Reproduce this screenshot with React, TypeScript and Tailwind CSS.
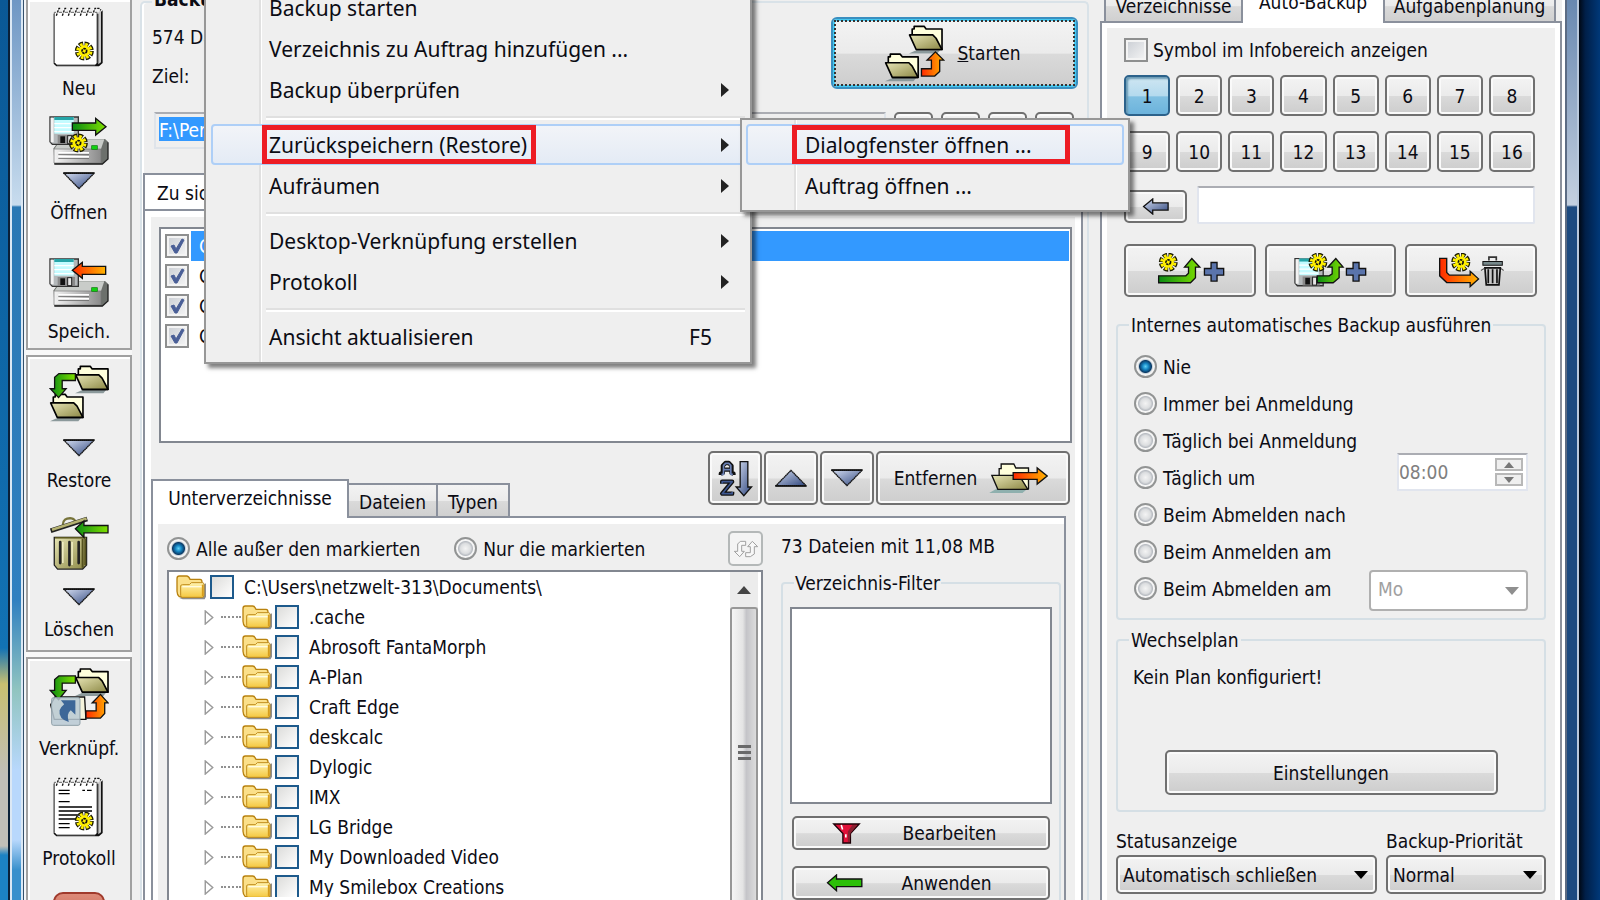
import React, { useId } from "react";

const BTN =
  "rounded-[5px] border-2 border-[#707070] bg-[linear-gradient(#f3f3f3,#ebebeb_50%,#dadada_52%,#cdcdcd)] shadow-[inset_0_0_0_2px_#fafafa] flex items-center justify-center";

function Defs({ id }: { id: string }) {
  return (
    <defs>
      <linearGradient id={id + "o"} x1="0" y1="0" x2="1" y2="1">
        <stop offset="0" stopColor="#e6e4b4" />
        <stop offset="1" stopColor="#8c8845" />
      </linearGradient>
      <linearGradient id={id + "g"} x1="0" y1="0" x2="1" y2="0">
        <stop offset="0" stopColor="#0a8a14" />
        <stop offset="1" stopColor="#7fe000" />
      </linearGradient>
      <linearGradient id={id + "r"} x1="0" y1="0" x2="1" y2="0">
        <stop offset="0" stopColor="#ff2a00" />
        <stop offset="1" stopColor="#ffb400" />
      </linearGradient>
      <linearGradient id={id + "b"} x1="0" y1="0" x2="1" y2="1">
        <stop offset="0" stopColor="#d3dcf0" />
        <stop offset="1" stopColor="#31487f" />
      </linearGradient>
      <linearGradient id={id + "s"} x1="0" y1="0" x2="1" y2="0">
        <stop offset="0" stopColor="#f4f4f4" />
        <stop offset="1" stopColor="#8a8a8a" />
      </linearGradient>
    </defs>
  );
}

function Folder({ x, y, id }: { x: number; y: number; id: string }) {
  return (
    <g transform={`translate(${x} ${y})`} strokeLinejoin="round">
      <path d="M-2 84L20 74H92L84 84Z" fill="#8b999b" />
      <path d="M8 30V10H14V2H44L50 10H98V72H22Z" fill="#ffffdc" stroke="#000" strokeWidth="5" />
      <path d="M0 28H70L80 38L98 72H20Z" fill={`url(#${id}o)`} stroke="#000" strokeWidth="5" />
    </g>
  );
}

function Gear({ x, y }: { x: number; y: number }) {
  return (
    <g transform={`translate(${x} ${y})`}>
      <circle r="20" fill="none" stroke="#1a1a00" strokeWidth="17" strokeDasharray="12 3.7" />
      <circle r="20" fill="none" stroke="#fff000" strokeWidth="9" strokeDasharray="8 7.7" strokeDashoffset="-2" />
      <circle r="17" fill="#fff000" />
      <circle r="7" fill="none" stroke="#111" strokeWidth="5" strokeDasharray="7 2" />
    </g>
  );
}

function Notepad({ lines }: { lines?: boolean }) {
  return (
    <svg viewBox="150 20 180 180" className="size-[60px]" aria-hidden="true">
      <path d="M175 40H300L311 30V188L300 198H172L164 190V40Z" fill="#111" />
      <path d="M298 36L306 30V186L298 192Z" fill="#c8c8c8" />
      <path d="M166 36H294V188L288 194H174L166 186Z" fill="#fff" stroke="#666" strokeWidth="3" />
      <path d="M172 46L180 24M190 46L198 24M208 46L216 24M226 46L234 24M244 46L252 24M262 46L270 24M280 46L288 24" stroke="#fff" strokeWidth="8" />
      <path d="M172 46L180 24H186M190 46L198 24H204M208 46L216 24H222M226 46L234 24H240M244 46L252 24H258M262 46L270 24H276M280 46L288 24H300L306 30" fill="none" stroke="#111" strokeWidth="4" strokeDasharray="7 3" />
      {lines && (
        <path d="M179 60H212M179 70H212M250 60H258M264 60H278M179 94H212M179 110H279M179 122H279M179 134H240M179 146H232M179 160H212M179 172H212" stroke="#000" strokeWidth="4" />
      )}
      <Gear x={256} y={152} />
    </svg>
  );
}

function Floppy() {
  return (
    <g>
      <path d="M153 348H238V430H160L153 422Z" fill="#b4b8ba" stroke="#333" strokeWidth="4" />
      <path d="M155 350H164V424H155Z" fill="#f2f2f2" />
      <rect x="166" y="348" width="58" height="50" fill="#c4fbff" />
      <rect x="166" y="348" width="58" height="9" fill="#25a5a8" />
      <path d="M166 368H224M166 380H224M166 392H224" stroke="#fff" strokeWidth="4" />
      <rect x="176" y="402" width="52" height="27" fill="#8a8a8a" />
      <rect x="184" y="406" width="14" height="20" fill="#111" />
      <rect x="206" y="404" width="12" height="24" fill="#e6e6e6" stroke="#222" strokeWidth="3" />
    </g>
  );
}

function Drive({ save }: { save?: boolean }) {
  const id = useId();
  return (
    <svg viewBox="150 345 180 147" className="h-[49px] w-[60px]" aria-hidden="true">
      <Defs id={id} />
      <path d="M164 442L184 414H318L327 422V474L310 490H166Z" fill="#6c706c" />
      <path d="M166 444L186 415H316L306 444Z" fill="#c9ccc9" />
      <path d="M165 444H306V486H165Z" fill={`url(#${id}s)`} stroke="#777" strokeWidth="2" />
      <path d="M178 456H270M178 468H270" stroke="#fff" strokeWidth="6" />
      <path d="M178 460H270M178 472H270" stroke="#6e6e6e" strokeWidth="3" />
      <path d="M166 489H310L327 474V424" fill="none" stroke="#222" strokeWidth="4" />
      <rect x="278" y="434" width="17" height="11" fill="#10d010" stroke="#087808" strokeWidth="2" />
      <Floppy />
      {save ? (
        <path d="M320 370H250V358L220 382L250 406V394H320Z" fill={`url(#${id}r)`} stroke="#111" strokeWidth="4" />
      ) : (
        <>
          <path d="M220 366H290V352L321 377L290 402V388H220Z" fill={`url(#${id}g)`} stroke="#111" strokeWidth="4" />
          <Gear x={238} y={426} />
        </>
      )}
    </svg>
  );
}

function Tri({ up }: { up?: boolean }) {
  const id = useId();
  return (
    <svg viewBox="0 0 96 54" className="h-[18px] w-[32px]" aria-hidden="true">
      <Defs id={id} />
      <path
        d={up ? "M3 50H93L48 4Z" : "M3 4H93L48 50Z"}
        fill={`url(#${id}b)`}
        stroke="#111"
        strokeWidth="4"
        strokeDasharray="5 1"
      />
      <path d={up ? "M1 51H95" : "M1 3H95"} stroke="#111" strokeWidth="5" />
    </svg>
  );
}

function RestoreIcon() {
  const id = useId();
  return (
    <svg viewBox="148 56 182 177" className="h-[59px] w-[60px]" aria-hidden="true">
      <Defs id={id} />
      <Folder x={229} y={60} id={id} />
      <Folder x={153} y={145} id={id} />
      <path d="M228 84H178L165 95V130H152L177 157L200 130H188V105H228Z" fill={`url(#${id}g)`} stroke="#111" strokeWidth="4" />
    </svg>
  );
}

function TrashIcon() {
  const id = useId();
  return (
    <svg viewBox="148 508 182 165" className="h-[55px] w-[60px]" aria-hidden="true">
      <Defs id={id} />
      <path d="M164 572H262V656L250 668H174L164 656Z" fill={`url(#${id}o)`} stroke="#222" strokeWidth="4" />
      <path d="M250 576V664M258 576V656" stroke="#55521f" strokeWidth="6" />
      <path d="M182 586V650M210 586V656M238 586V650" stroke="#222" strokeWidth="8" strokeLinecap="round" />
      <path d="M190 586V650M218 586V656" stroke="#f8f6d0" strokeWidth="4" />
      <path d="M166 573H260" stroke="#5a5720" strokeWidth="5" />
      <path d="M190 534Q190 512 216 514Q226 516 228 524" fill="none" stroke="#77743a" strokeWidth="7" />
      <path d="M153 552L264 516" stroke="#222" strokeWidth="14" />
      <path d="M157 549L262 515" stroke="#b5b272" strokeWidth="8" />
      <path d="M327 536H254V522L228 546L254 572V558H327Z" fill={`url(#${id}g)`} stroke="#111" strokeWidth="4" />
    </svg>
  );
}

function LinkIcon() {
  const id = useId();
  return (
    <svg viewBox="148 82 182 180" className="size-[60px]" aria-hidden="true">
      <Defs id={id} />
      <path d="M153 196L166 172H256L260 240H164Z" fill="#f6f4dc" stroke="#111" strokeWidth="4" />
      <Folder x={229} y={85} id={id} />
      <path d="M228 108H178L165 119V152H152L177 180L200 152H188V130H228Z" fill={`url(#${id}g)`} stroke="#111" strokeWidth="4" />
      <path d="M260 214H291V190H279L304 164L327 190H317V222L304 236H260Z" fill={`url(#${id}r)`} stroke="#111" strokeWidth="4" />
      <rect x="156" y="174" width="86" height="84" rx="6" fill="#b9c9d3" fillOpacity=".85" stroke="#8fa0a8" strokeWidth="3" />
      <path d="M184 182H228V226L214 212Q200 222 208 248Q176 238 180 212Q182 204 194 194Z" fill="#3d6798" />
    </svg>
  );
}

function StartIcon() {
  const id = useId();
  return (
    <svg viewBox="552 70 184 176" className="h-[59px] w-[61px]" aria-hidden="true">
      <Defs id={id} />
      <Folder x={629} y={74} id={id} />
      <Folder x={557} y={158} id={id} />
      <path d="M665 204H695V178H682L707 153L732 178H720V212L705 226H665Z" fill={`url(#${id}r)`} stroke="#111" strokeWidth="4" />
    </svg>
  );
}

function SmallFolder() {
  const id = useId();
  return (
    <svg viewBox="0 0 90 74" className="h-[26px] w-[30px] shrink-0" aria-hidden="true">
      <defs>
        <linearGradient id={id} x1="0" y1="0" x2="0" y2="1">
          <stop offset="0" stopColor="#fff3b0" />
          <stop offset="1" stopColor="#f5c840" />
        </linearGradient>
      </defs>
      <path d="M10 70L20 74H86L90 66V26Z" fill="#8d8d8d" />
      <path d="M3 12Q3 4 10 4H32Q38 4 42 14H72Q78 14 78 22V66H10Q3 60 3 50Z" fill="#fbe08a" stroke="#b9820f" strokeWidth="4" />
      <path d="M14 34Q14 30 20 30H40L46 24H80Q84 24 84 30V62Q84 68 78 68H18Q14 68 14 62Z" fill={`url(#${id})`} stroke="#c08c1c" strokeWidth="3" />
      <path d="M19 36H79" stroke="#fffbe0" strokeWidth="4" />
      <path d="M80 30V64" stroke="#d79d1c" strokeWidth="5" />
    </svg>
  );
}

function SideButton({
  icon,
  drop,
  label,
  gap = "",
  labelGap = "mt-[9px]",
}: {
  icon: React.ReactNode;
  drop?: string;
  label: string;
  gap?: string;
  labelGap?: string;
}) {
  return (
    <button className={"flex w-full flex-col items-center " + gap}>
      {icon}
      {drop && (
        <span className={drop}>
          <Tri />
        </span>
      )}
      <span className={labelGap}>{label}</span>
    </button>
  );
}

function Radio({ name, label, checked }: { name: string; label: string; checked?: boolean }) {
  return (
    <label className="flex h-[37px] items-center gap-[6px] whitespace-nowrap">
      <input
        type="radio"
        name={name}
        defaultChecked={checked}
        className="size-[23px] shrink-0 appearance-none rounded-full border-2 border-[#929494] bg-[radial-gradient(circle,#f4f4f4_0,#dcdee0_5px,#b8bcc2_7px,#f6f6f6_8px)] checked:bg-[radial-gradient(circle_at_50%_50%,#5fd0f5_0,#1687c4_3px,#0b3a66_6px,#c9d3da_7px,#f4f4f4_8px)]"
      />
      {label}
    </label>
  );
}

function Check({ label, checked }: { label: string; checked?: boolean }) {
  return (
    <span className="grid size-[24px] shrink-0">
      <input
        type="checkbox"
        aria-label={label}
        defaultChecked={checked}
        className="[grid-area:1/1] size-[24px] appearance-none border-2 border-[#8e8f8f] bg-[linear-gradient(135deg,#c9cdd3,#f6f6f6)] shadow-[inset_0_0_0_2px_#f4f4f4]"
      />
      {checked && (
        <svg viewBox="0 0 24 24" className="pointer-events-none [grid-area:1/1]" aria-hidden="true">
          <path d="M6 12L9 11L11 15L17 5L19 6L12 19H10Z" fill="#4a5f97" stroke="#4a5f97" />
        </svg>
      )}
    </span>
  );
}

function Combo({ id, label, value, disabled, box }: { id?: string; label?: string; value: string; disabled?: boolean; box: string }) {
  return (
    <span className={"grid " + box}>
      <select
        id={id}
        aria-label={label}
        disabled={disabled}
        className={
          disabled
            ? "[grid-area:1/1] appearance-none rounded-[4px] border-2 border-[#b0b0b0] bg-white pb-[4px] pl-[7px] text-[#a0a0a0] opacity-100"
            : "[grid-area:1/1] appearance-none rounded-[5px] border-2 border-[#707070] bg-[linear-gradient(#f3f3f3,#ebebeb_50%,#dadada_52%,#cdcdcd)] pl-[5px] shadow-[inset_0_0_0_2px_#fafafa]"
        }
      >
        <option>{value}</option>
      </select>
      <svg viewBox="0 0 14 8" className="pointer-events-none mr-[9px] h-[8px] w-[14px] self-center justify-self-end [grid-area:1/1]" aria-hidden="true">
        <path d="M0 0H14L7 8Z" fill={disabled ? "#8f8f8f" : "#000"} />
      </svg>
    </span>
  );
}

const folders = [
  ".cache",
  "Abrosoft FantaMorph",
  "A-Plan",
  "Craft Edge",
  "deskcalc",
  "Dylogic",
  "IMX",
  "LG Bridge",
  "My Downloaded Video",
  "My Smilebox Creations",
];

const GROUP = "border-2 border-[#a0a0a0] shadow-[inset_1px_1px_0_1px_#fff]";

function Sidebar() {
  return (
    <nav aria-label="Werkzeuge" className="flex w-[106px] shrink-0 flex-col gap-[5px] bg-[#f8f8f8]">
      <div className={"h-[350px] shrink-0 border-t-0 bg-[#efefef] pt-[7px] " + GROUP}>
        <SideButton icon={<Notepad />} label="Neu" />
        <SideButton icon={<Drive />} drop="mt-[7px]" label="Öffnen" gap="mt-4" labelGap="mt-[10px]" />
        <SideButton icon={<Drive save />} label="Speich." gap="mt-[34px]" labelGap="mt-3" />
      </div>
      <div className={"h-[297px] shrink-0 bg-[#efefef] pt-[7px] " + GROUP}>
        <SideButton icon={<RestoreIcon />} drop="mt-4" label="Restore" labelGap="mt-[11px]" />
        <SideButton icon={<TrashIcon />} drop="mt-[17px]" label="Löschen" gap="mt-6" labelGap="mt-[11px]" />
      </div>
      <div className={"flex-1 border-b-0 bg-[#efefef] pt-[8px] " + GROUP}>
        <SideButton icon={<LinkIcon />} label="Verknüpf." />
        <SideButton icon={<Notepad lines />} label="Protokoll" gap="mt-[17px]" />
        <div className="mx-auto mt-[22px] h-[60px] w-[52px] rounded-t-[10px] border-2 border-[#a03a2c] bg-[linear-gradient(#dd8a78,#b84a38)]" />
      </div>
    </nav>
  );
}

function SortIcon() {
  const id = useId();
  return (
    <svg viewBox="86 88 104 114" className="h-[38px] w-[35px]" aria-hidden="true">
      <Defs id={id} />
      <g fill="none" strokeLinejoin="round">
        <path d="M94 136V132L100 130V108L108 100H118L126 108V130L132 132V136M104 120H122" stroke="#111" strokeWidth="13" />
        <path d="M96 134H102V108L108 101H118L124 108V134H130M104 120H122" stroke="#6a80b4" strokeWidth="5" />
        <path d="M98 162V156H128L98 192H128V186" stroke="#111" strokeWidth="13" />
        <path d="M98 162V156H128L98 192H128V186" stroke="#3d568f" strokeWidth="5" />
      </g>
      <path d="M152 96H175V172H186L163 198L140 172H152Z" fill={`url(#${id}b)`} stroke="#111" strokeWidth="4" />
    </svg>
  );
}

function RemoveIcon() {
  const id = useId();
  return (
    <svg viewBox="900 100 176 96" className="h-[32px] w-[59px]" aria-hidden="true">
      <Defs id={id} />
      <path d="M900 193L930 176H1020L1000 193Z" fill="#8fb0ae" />
      <path d="M930 140V120H936V106H974L980 118H1018V180H940Z" fill="#ffffdc" stroke="#111" strokeWidth="4" />
      <path d="M908 140H990L1016 182H926Z" fill={`url(#${id}o)`} stroke="#111" strokeWidth="4" />
      <path d="M972 132H1044V118L1074 142L1044 166V152H972Z" fill={`url(#${id}r)`} stroke="#111" strokeWidth="4" />
    </svg>
  );
}

function Main() {
  return (
    <main className="mt-px ml-[8px] flex min-w-0 flex-1 flex-col rounded-t-[5px] border-2 border-b-0 border-[#d9e2e8] shadow-[inset_2px_0_0_#fff]">
      <div className="flex h-[111px] items-start justify-between pr-[9px] pl-[10px]">
        <div>
          <h2 className="-mt-[16px] bg-[#efefef] pl-[2px] font-bold">Backup-Auftrag</h2>
          <p className="mt-[14px]">574 Dateien</p>
          <p className="mt-[15px]">Ziel:</p>
        </div>
        <button className="mt-[14px] h-[72px] w-[247px] rounded-[6px] border-2 border-[#3a8fc0] bg-[linear-gradient(#f3f3f3,#ebebeb_50%,#dadada_52%,#cdcdcd)] p-[1px] shadow-[inset_0_0_0_2px_#45c8f0]">
          <span className="flex size-full items-center justify-center gap-[12px] border-2 border-dotted border-[#333] pr-1">
            <StartIcon />
            <span>
              <u>S</u>tarten
            </span>
          </span>
        </button>
      </div>
      <div className="flex gap-2 pr-[13px] pl-3">
        <input
          aria-label="Ziel"
          defaultValue="F:\Persönlich"
          className="h-[37px] min-w-0 flex-1 border-2 border-[#dfe4ea] border-t-[#abadb3] bg-[linear-gradient(#3399ff,#3399ff)] bg-[length:240px_24px] bg-[position:3px_3px] bg-no-repeat pl-[3px] text-white"
        />
        {["Öffnen", "Suchen", "Verlauf", "Optionen"].map((n) => (
          <button key={n} aria-label={n} className={"h-[37px] w-[39px] " + BTN} />
        ))}
      </div>
      <div className="mt-6 ml-[1px] h-[39px] w-[300px] border-2 border-b-0 border-[#8a909c] bg-white pt-[6px] pl-[12px]">Zu sichernde Verzeichnisse</div>
      <div className="-mt-[2px] mr-[4px] ml-[1px] flex flex-1 flex-col border-2 border-b-0 border-[#8a909c] bg-white px-[6px] pt-[6px]">
        <div className="flex flex-1 flex-col bg-[#efefef] pt-[10px]">
          <ul className="mr-[3px] ml-[8px] h-[216px] border-2 border-[#828790] bg-white pt-[2px] pl-[4px]">
            {["Documents", "Pictures", "Music", "Videos"].map((n, i) => (
              <li key={n} className="flex h-[30px] items-center">
                <Check label={n} checked />
                <span className={i === 0 ? "mr-[1px] ml-[2px] flex h-[30px] flex-1 items-center bg-[#3399ff] pl-2 text-white" : "ml-[2px] pl-2"}>C:\Users\{n}</span>
              </li>
            ))}
          </ul>
          <div className="mt-[8px] mr-[5px] flex h-[65px] justify-between">
            <div role="tablist" className="z-10 flex items-end self-end">
              <button role="tab" aria-selected="true" className="-mb-[2px] h-[39px] w-[198px] border-2 border-b-0 border-[#8a909c] bg-white pb-1">
                Unterverzeichnisse
              </button>
              {["Dateien", "Typen"].map((t) => (
                <button
                  key={t}
                  role="tab"
                  className="h-[33px] border-2 border-b-0 border-l-0 border-[#8a909c] bg-[linear-gradient(#f3f3f3,#ebebeb_50%,#dadada_52%,#d0d0d0)] px-[10px] pt-[2px]"
                >
                  {t}
                </button>
              ))}
            </div>
            <div className="flex h-[54px] gap-[2px]">
              <button aria-label="Sortieren" className={"w-[54px] " + BTN}>
                <SortIcon />
              </button>
              <button aria-label="Nach oben" className={"w-[54px] " + BTN}>
                <Tri up />
              </button>
              <button aria-label="Nach unten" className={"w-[54px] " + BTN}>
                <Tri />
              </button>
              <button className={"w-[194px] gap-[12px] pr-1 " + BTN}>
                Entfernen
                <RemoveIcon />
              </button>
            </div>
          </div>
          <div className="mr-[9px] flex flex-1 flex-col border-2 border-b-0 border-[#8a909c] bg-white pt-[6px] pl-[5px]">
            <div className="flex flex-1 bg-[#efefef] pl-[9px]">
              <div className="flex min-w-0 flex-1 flex-col">
                <div className="flex h-[46px] items-center gap-[34px] pt-[3px]">
                  <Radio name="mode" label="Alle außer den markierten" checked />
                  <Radio name="mode" label="Nur die markierten" />
                  <button aria-label="Umkehren" className="ml-auto flex size-[35px] items-center justify-center rounded-[5px] border-2 border-[#b4b8b8] bg-[#f4f4f4]">
                    <svg viewBox="0 0 78 54" className="h-[18px] w-[26px]" fill="#f8f8f8" stroke="#a0a0a0" strokeWidth="3" aria-hidden="true">
                      <path d="M38 4H22L14 12V34H4L20 50L34 34H26V16H38Z" />
                      <path d="M38 50H52L64 42V20H74L58 4L44 20H52V38H38Z" />
                    </svg>
                  </button>
                </div>
                <div className="flex flex-1 border-2 border-b-0 border-[#828790] bg-white">
                  <ul className="h-[325px] min-w-0 flex-1 overflow-hidden pl-[7px]">
                    <li className="flex h-[30px] items-center">
                      <SmallFolder />
                      <input type="checkbox" aria-label="Documents" className="ml-[4px] size-[24px] appearance-none border-2 border-[#1d5a8c] bg-[linear-gradient(135deg,#dcdcda,#fff)]" />
                      <span className="ml-[10px]">C:\Users\netzwelt-313\Documents\</span>
                    </li>
                    {folders.map((f) => (
                      <li key={f} className="flex h-[30px] items-center pl-[28px]">
                        <svg viewBox="0 0 10 16" className="h-[15px] w-[10px]" aria-hidden="true">
                          <path d="M1 1V15L9 8Z" fill="#fff" stroke="#9a9a9a" strokeWidth="1.5" />
                        </svg>
                        <span className="mr-px ml-[7px] w-[20px] border-t-2 border-dotted border-[#909090]" />
                        <SmallFolder />
                        <input type="checkbox" aria-label={f} className="ml-[3px] size-[24px] appearance-none border-2 border-[#1d5a8c] bg-[linear-gradient(135deg,#dcdcda,#fff)]" />
                        <span className="ml-[10px]">{f}</span>
                      </li>
                    ))}
                  </ul>
                  <div className="mr-[3px] flex w-[28px] flex-col bg-[#ececec]">
                    <div className="flex h-[35px] items-center justify-center">
                      <svg viewBox="0 0 14 8" className="h-[8px] w-[14px]" aria-hidden="true">
                        <path d="M0 8H14L7 0Z" fill="#444" />
                      </svg>
                    </div>
                    <div className="flex flex-1 flex-col items-center gap-[3px] rounded-t-[3px] border-2 border-b-0 border-[#979797] bg-[linear-gradient(90deg,#f5f5f5,#e4e4e4_45%,#c4c4c8_60%,#dcdcdc)] pt-[136px]">
                      <span className="h-[3px] w-[13px] bg-[#6a6a6a]" />
                      <span className="h-[3px] w-[13px] bg-[#6a6a6a]" />
                      <span className="h-[3px] w-[13px] bg-[#6a6a6a]" />
                    </div>
                  </div>
                </div>
              </div>
              <div className="mr-[3px] ml-[18px] flex w-[280px] flex-col">
                <p className="mt-[10px] h-[24px]">73 Dateien mit 11,08 MB</p>
                <fieldset className="mt-[13px] flex-1 rounded-t-[4px] border-2 border-b-0 border-[#d5dfe5] px-[7px]">
                  <legend className="ml-[4px] h-[24px] px-[1px]">Verzeichnis-Filter</legend>
                  <textarea aria-label="Verzeichnis-Filter" className="mt-[12px] block h-[197px] w-full resize-none border-2 border-[#828790] bg-white" />
                  <div className="mx-[2px] mt-[12px] flex flex-col gap-4">
                    <button className={"h-[34px] w-full gap-[38px] pr-[18px] " + BTN}>
                      <svg viewBox="417 1180 110 64" className="h-[21px] w-[37px]" aria-hidden="true">
                        <path d="M433 1183H511L484 1212V1241H461V1212Z" fill="#e01038" stroke="#1a0006" strokeWidth="4" />
                        <path d="M484 1212L504 1186H490L476 1206V1238H482Z" fill="#8a2030" />
                        <path d="M456 1186L460 1200M470 1214V1224" stroke="#fff" strokeWidth="5" />
                      </svg>
                      Bearbeiten
                    </button>
                    <button className={"h-[34px] w-full gap-[38px] pr-[24px] " + BTN}>
                      <svg viewBox="403 1337 110 54" className="h-[18px] w-[37px]" aria-hidden="true">
                        <path d="M510 1352H434V1340L407 1363L434 1387V1375H510Z" fill="#2cc008" stroke="#111" strokeWidth="4" />
                      </svg>
                      Anwenden
                    </button>
                  </div>
                </fieldset>
              </div>
            </div>
          </div>
        </div>
      </div>
    </main>
  );
}

function Plus() {
  return <path d="M400 790H418V808H438V828H418V846H400V828H380V808H400Z" fill="#5a74ac" stroke="#111" strokeWidth="4" />;
}

function AddIcon({ disk }: { disk?: boolean }) {
  const id = useId();
  return disk ? (
    <svg viewBox="640 762 220 104" className="h-[35px] w-[73px]" aria-hidden="true">
      <Defs id={id} />
      <g transform="translate(490 430)">
        <Floppy />
      </g>
      <path d="M710 830H746L755 824V804H742L766 778L788 804H776V836L758 851H710Z" fill={`url(#${id}g)`} stroke="#111" strokeWidth="4" />
      <Gear x={712} y={789} />
      <g transform="translate(418 0)">
        <Plus />
      </g>
    </svg>
  ) : (
    <svg viewBox="228 762 214 104" className="h-[35px] w-[71px]" aria-hidden="true">
      <Defs id={id} />
      <path d="M242 830H324L332 822V804H320L342 778L366 804H353V836L338 851H242Z" fill={`url(#${id}g)`} stroke="#111" strokeWidth="4" />
      <Gear x={271} y={789} />
      <Plus />
    </svg>
  );
}

function DeleteIcon() {
  const id = useId();
  return (
    <svg viewBox="1078 762 200 104" className="h-[35px] w-[67px]" aria-hidden="true">
      <Defs id={id} />
      <path d="M1083 778H1104V820L1112 828H1174V816L1199 839L1174 862V850H1104L1083 830Z" fill={`url(#${id}r)`} stroke="#111" strokeWidth="4" />
      <Gear x={1146} y={789} />
      <path d="M1218 806H1264L1260 857H1222Z" fill="#c8c8c8" stroke="#111" strokeWidth="5" />
      <path d="M1228 810V852M1241 810V852M1254 810V852" stroke="#111" strokeWidth="5" />
      <path d="M1212 787H1270V798H1212Z" fill="#77898b" stroke="#111" strokeWidth="3" />
      <path d="M1230 784V774H1252V784" fill="none" stroke="#333" strokeWidth="5" />
      <path d="M1206 814L1216 808M1274 814L1266 808" stroke="#555" strokeWidth="3" />
    </svg>
  );
}

function RightPanel() {
  const id = useId();
  const tab = "h-[32px] border-2 border-[#8a909c] bg-[linear-gradient(#f3f3f3,#ebebeb_50%,#dadada_52%,#d0d0d0)] border-b-0";
  return (
    <aside className="ml-[11px] flex w-[462px] shrink-0 flex-col">
      <div role="tablist" className="z-10 flex h-[21px] items-end pr-[6px] pl-[4px]">
        <button role="tab" className={"w-[139px] " + tab}>Verzeichnisse</button>
        <button role="tab" aria-selected="true" className="-mb-[2px] h-[42px] w-[140px] bg-white">Auto-Backup</button>
        <button role="tab" className={"flex-1 " + tab}>Aufgabenplanung</button>
      </div>
      <div className="flex flex-1 flex-col border-2 border-b-0 border-[#8a909c] bg-white px-[5px] pt-[5px]">
        <div className="flex-1 bg-[#efefef] px-[9px] pt-[10px]">
          <div className="pr-[9px] pl-[8px]">
            <label className="flex h-[24px] items-center gap-[5px] whitespace-nowrap">
              <Check label="Symbol im Infobereich anzeigen" />
              Symbol im Infobereich anzeigen
            </label>
            <div className="mt-[13px] mr-[2px] grid grid-cols-8 gap-x-[6px] gap-y-[15px]">
              {Array.from({ length: 16 }, (_, i) => (
                <button
                  key={i}
                  className={
                    i === 0
                      ? "flex h-[41px] items-center justify-center rounded-[5px] border-2 border-[#2c628b] bg-[linear-gradient(#cfe6f2,#b4daee_50%,#80c0e2_54%,#6cb3dc)] shadow-[inset_2px_2px_2px_#6a9ab4]"
                      : "h-[41px] " + BTN
                  }
                >
                  {i + 1}
                </button>
              ))}
            </div>
            <div className="mt-[14px] mr-[2px] flex gap-[10px]">
              <button aria-label="Zurück" className={"mt-[4px] h-[33px] w-[63px] " + BTN}>
                <svg viewBox="186 596 84 52" className="h-[17px] w-[28px]" aria-hidden="true">
                  <Defs id={id} />
                  <path d="M265 611H218V599L190 622L218 645V633H265Z" fill={`url(#${id}b)`} stroke="#111" strokeWidth="4" />
                </svg>
              </button>
              <input aria-label="Bezeichnung" className="h-[38px] min-w-0 flex-1 rounded-[2px] border-2 border-[#e1e5ee] border-t-[#abadb3] bg-white px-2" />
            </div>
            <div className="mt-[20px] grid h-[53px] grid-cols-3 gap-[9px]">
              <button aria-label="Auftrag hinzufügen" className={BTN}>
                <AddIcon />
              </button>
              <button aria-label="Auftrag speichern und hinzufügen" className={BTN}>
                <AddIcon disk />
              </button>
              <button aria-label="Auftrag löschen" className={BTN}>
                <DeleteIcon />
              </button>
            </div>
          </div>
          <fieldset className="mt-[16px] rounded-[4px] border-2 border-[#d5dfe5] px-[16px] pb-[7px]">
            <legend className="-ml-[5px] h-[24px] px-[2px]">Internes automatisches Backup ausführen</legend>
            <div className="mt-[11px] flex justify-between">
              <div>
                {["Nie", "Immer bei Anmeldung", "Täglich bei Anmeldung", "Täglich um", "Beim Abmelden nach", "Beim Anmelden am", "Beim Abmelden am"].map((t, i) => (
                  <Radio key={t} name="auto" label={t} checked={i === 0} />
                ))}
              </div>
              <div className="flex flex-col items-end pt-[105px]">
                <div className="flex h-[38px] w-[131px] items-center justify-between border-2 border-[#e1e5ee] border-t-[#abadb3] bg-white pr-[3px]">
                  <input aria-label="Uhrzeit" disabled defaultValue="08:00" className="w-[70px] text-[#808080]" />
                  <div className="flex flex-col gap-[2px]">
                    {["M0 6H10L5 0Z", "M0 0H10L5 6Z"].map((d, i) => (
                      <button key={d} disabled aria-label={i ? "Später" : "Früher"} className="flex h-[13px] w-[28px] items-center justify-center border-2 border-[#b8b8b8] bg-[#efefef]">
                        <svg viewBox="0 0 10 6" className="h-[6px] w-[10px]" aria-hidden="true">
                          <path d={d} fill="#777" />
                        </svg>
                      </button>
                    ))}
                  </div>
                </div>
                <Combo label="Wochentag" value="Mo" disabled box="mt-[79px] h-[41px] w-[159px]" />
              </div>
            </div>
          </fieldset>
          <fieldset className="mt-[8px] rounded-[4px] border-2 border-[#d5dfe5] px-[15px] pb-[15px]">
            <legend className="-ml-[4px] h-[24px] px-[2px]">Wechselplan</legend>
            <p className="mt-[13px]">Kein Plan konfiguriert!</p>
            <button className={"mx-auto mt-[61px] h-[45px] w-[333px] " + BTN}>Einstellungen</button>
          </fieldset>
          <div className="mt-[17px] flex gap-[9px]">
            <div className="w-[261px]">
              <label htmlFor="status" className="block h-[26px]">Statusanzeige</label>
              <Combo id="status" value="Automatisch schließen" box="h-[39px]" />
            </div>
            <div className="flex-1">
              <label htmlFor="priority" className="block h-[26px]">Backup-Priorität</label>
              <Combo id="priority" value="Normal" box="h-[39px]" />
            </div>
          </div>
        </div>
      </div>
    </aside>
  );
}

const HOVER = "rounded-[4px] border-2 border-[#aecff7] bg-[linear-gradient(#f2f4f8,#e4ebf5)]";

function MenuItem({ label, arrow, keys }: { label: string; arrow?: boolean; keys?: string }) {
  return (
    <div role="menuitem" className="flex h-[41px] items-center justify-between pr-[16px] pl-[58px] whitespace-nowrap">
      <span>{label}</span>
      {arrow && <Arrow />}
      {keys && <span className="mr-[17px]">{keys}</span>}
    </div>
  );
}

function Arrow() {
  return (
    <svg viewBox="0 0 8 14" className="h-[14px] w-[8px]" aria-hidden="true">
      <path d="M0 0L8 7L0 14Z" fill="#222" />
    </svg>
  );
}

function Sep() {
  return <div role="separator" className="my-[6px] ml-[55px] h-[2px] border-t-2 border-[#e0e0e0] shadow-[0_2px_0_#fff]" />;
}

const MENU_BG = "border-2 border-[#979797] bg-[#efefef] shadow-[4px_4px_4px_rgba(0,0,0,.5)]";

function ContextMenu() {
  return (
    <div role="menu" className={"absolute top-[-22px] left-[204px] z-20 w-[548px] px-[5px] pt-[7px] pb-[5px] font-[Noto_Sans,sans-serif] text-[21px] leading-[28px] " + MENU_BG}>
      <div className="absolute inset-y-0 left-[53px] w-[3px] border-l-2 border-[#e0e0e0] bg-white" />
      <div className="relative">
        <MenuItem label="Backup starten" />
        <MenuItem label="Verzeichnis zu Auftrag hinzufügen ..." />
        <MenuItem label="Backup überprüfen" arrow />
        <Sep />
        <div role="menuitem" className={"relative flex h-[41px] items-center justify-between pr-[14px] pl-[49px] whitespace-nowrap " + HOVER}>
          <span className="flex h-[39px] w-[274px] items-center border-[5px] border-[#ed1c24] pl-[2px]">Zurückspeichern (Restore)</span>
          <Arrow />
          <div role="menu" className={"absolute -top-[8px] left-[527px] w-[390px] px-[4px] pt-[4px] pb-[4px] " + MENU_BG}>
            <div className="absolute inset-y-0 left-[52px] w-[3px] border-l-2 border-[#e0e0e0] bg-white" />
            <div className="relative">
              <div role="menuitem" className={"flex h-[41px] items-center pl-[44px] " + HOVER}>
                <span className="flex h-[39px] w-[278px] items-center border-[5px] border-[#ed1c24] pl-[8px]">Dialogfenster öffnen ...</span>
              </div>
              <div role="menuitem" className="flex h-[41px] items-center pl-[59px]">
                Auftrag öffnen ...
              </div>
            </div>
          </div>
        </div>
        <MenuItem label="Aufräumen" arrow />
        <Sep />
        <MenuItem label="Desktop-Verknüpfung erstellen" arrow />
        <MenuItem label="Protokoll" arrow />
        <Sep />
        <MenuItem label="Ansicht aktualisieren" keys="F5" />
      </div>
    </div>
  );
}

export default function App() {
  return (
    <div className="relative flex h-screen w-full overflow-hidden bg-[#efefef] font-[DejaVu_Sans_Condensed,DejaVu_Sans,sans-serif] text-[19px] leading-[24px] text-[#0c0c14]">
      <div className="w-[10px] shrink-0 border-r-2 border-[#0a2038] bg-[linear-gradient(#0a5896,#1272b4_72%,#c8c070_76%,#c0beb8_86%,#c0beb8_94%,#1c82c4_95%)]" />
      <div className="w-[13px] shrink-0 border-x-2 border-[#dbe8f4] bg-[linear-gradient(#6e97c4,#c8dcee_205px,#2a78b4_207px,#3080c0_600px,#90c4c0_690px,#b8d8fc_770px,#b8d8fc_840px,#3890cc_870px)]" />
      <div className="w-[3px] shrink-0 border-l border-[#34506c] bg-[#f4f6f8]" />
      <Sidebar />
      <Main />
      <RightPanel />
      <div className="w-[5px] shrink-0 border-r-2 border-[#5c6c84] bg-white" />
      <div className="w-[12px] shrink-0 border-r-2 border-[#b8c8dc] bg-[linear-gradient(#6888b0,#c4d0e0_205px,#1c4a80_207px)]" />
      <div className="w-[21px] shrink-0 bg-[linear-gradient(90deg,#000814,#001f48_30%,#003878)]" />
      <ContextMenu />
    </div>
  );
}
